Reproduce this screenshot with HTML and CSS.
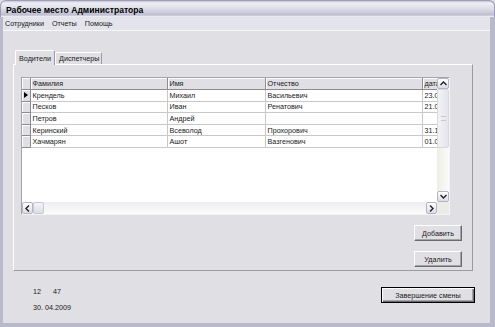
FILE: index.html
```html
<!DOCTYPE html>
<html lang="ru">
<head>
    <meta charset="UTF-8">
    <title>Рабочее место Администратора</title>
    <link rel="stylesheet" href="styles.css">
</head>
<body>
    <div class="window">
        <div class="titlebar">Рабочее место Администратора</div>
        <div class="frame">
            <div class="menubar">
                <span>Сотрудники</span>
                <span>Отчеты</span>
                <span>Помощь</span>
            </div>
            <div class="client">
                <div class="tabs">
                    <div class="tab active">Водители</div>
                    <div class="tab">Диспетчеры</div>
                </div>
                <div class="tab-panel">
                    <div class="grid">
                        <div class="grid-view">
                            <table class="data">
                                <colgroup>
                                    <col class="c-ind"><col class="c-fam"><col class="c-name"><col class="c-patr"><col class="c-date">
                                </colgroup>
                                <thead>
                                    <tr><th class="ind"></th><th>Фамилия</th><th>Имя</th><th>Отчество</th><th>дата</th></tr>
                                </thead>
                                <tbody>
                                    <tr><td class="ind"><span class="pointer"></span></td><td>Крендель</td><td>Михаил</td><td>Васильевич</td><td>23.09.1972</td></tr>
                                    <tr><td class="ind"></td><td>Песков</td><td>Иван</td><td>Ренатович</td><td>21.03.1980</td></tr>
                                    <tr><td class="ind"></td><td>Петров</td><td>Андрей</td><td></td><td></td></tr>
                                    <tr><td class="ind"></td><td>Керинский</td><td>Всеволод</td><td>Прохорович</td><td>31.12.1968</td></tr>
                                    <tr><td class="ind"></td><td>Хачмарян</td><td>Ашот</td><td>Вазгенович</td><td>01.05.1977</td></tr>
                                </tbody>
                            </table>
                        </div>
                        <div class="vscroll">
                            <div class="sbtn">
                                <svg width="7" height="5" viewBox="0 0 7 5"><path d="M0.5 4 L3.5 1 L6.5 4" fill="none" stroke="#222" stroke-width="1.4"/></svg>
                            </div>
                            <div class="vtrack"><div class="vthumb"><span class="grip"></span></div></div>
                            <div class="sbtn">
                                <svg width="7" height="5" viewBox="0 0 7 5"><path d="M0.5 1 L3.5 4 L6.5 1" fill="none" stroke="#222" stroke-width="1.4"/></svg>
                            </div>
                        </div>
                        <div class="hscroll">
                            <div class="sbtn">
                                <svg width="5" height="7" viewBox="0 0 5 7"><path d="M4 0.5 L1 3.5 L4 6.5" fill="none" stroke="#222" stroke-width="1.4"/></svg>
                            </div>
                            <div class="hthumb"></div>
                            <div class="htrack"></div>
                            <div class="sbtn">
                                <svg width="5" height="7" viewBox="0 0 5 7"><path d="M1 0.5 L4 3.5 L1 6.5" fill="none" stroke="#222" stroke-width="1.4"/></svg>
                            </div>
                        </div>
                        <div class="corner"></div>
                    </div>
                    <div class="actions">
                        <div class="button">Добавить</div>
                        <div class="button">Удалить</div>
                    </div>
                </div>
                <div class="footer">
                    <div class="clock">
                        <div><span class="hh">12</span>47</div>
                        <div>30. 04.2009</div>
                    </div>
                    <div class="button default">Завершение смены</div>
                </div>
            </div>
        </div>
    </div>
</body>
</html>
```

FILE: styles.css
```css
body {
    margin: 0;
    width: 495px;
    height: 327px;
    overflow: hidden;
    background: #e0dfe3;
    font-family: "Liberation Sans", Arial, sans-serif;
    font-size: 7.2px;
    color: #1a1a1a;
}
.window {
    height: 327px;
    display: flex;
    flex-direction: column;
}
.titlebar {
    height: 17px;
    box-sizing: border-box;
    padding: 1px 0 0 5px;
    display: flex;
    align-items: center;
    font-size: 8.6px;
    font-weight: bold;
    color: #000;
    border: 1px solid #9c9cb4;
    border-bottom: none;
    border-radius: 6px 6px 0 0;
    background: linear-gradient(#c4c4d6 0, #eeeef4 2px, #dcdce8 8px, #bdbdd0 14px, #fafafc 16px);
}
.frame {
    flex: 1;
    display: flex;
    flex-direction: column;
    border-left: 3px solid #b9b9cc;
    border-right: 5px solid #b9b9cc;
    border-bottom: 4px solid #b9b9cc;
}
.menubar {
    height: 14px;
    box-sizing: border-box;
    display: flex;
    align-items: center;
    gap: 8px;
    padding-left: 2px;
    background: #e4e4ec;
    border-bottom: 1px solid #f8f8fa;
}
.client {
    flex: 1;
    padding: 19px 15px 0 10px;
}
.tabs {
    display: flex;
    align-items: flex-end;
    height: 14px;
    padding-left: 2px;
}
.tab {
    height: 12px;
    box-sizing: border-box;
    padding: 0 2px 0 3px;
    display: flex;
    align-items: center;
    border: 1px solid #9a9aa0;
    border-top-color: #fff;
    border-left-color: #fff;
    border-bottom: none;
    border-radius: 2px 2px 0 0;
    background: #e0dfe3;
}
.tab.active {
    height: 15px;
    margin-bottom: -1px;
    padding: 0 3px 0 3px;
    position: relative;
    z-index: 1;
}
.tab-panel {
    height: 207px;
    box-sizing: border-box;
    margin-right: 2px;
    padding: 12px 10px 0 7px;
    display: flex;
    flex-direction: column;
    border: 1px solid #fff;
    border-right-color: #9a9aa0;
    border-bottom-color: #9a9aa0;
}
.grid {
    width: 429px;
    height: 138px;
    box-sizing: border-box;
    display: grid;
    grid-template-columns: 1fr 12px;
    grid-template-rows: 1fr 12px;
    border: 1px solid #a4a4a8;
    border-right-color: #f4f4f6;
    border-bottom-color: #f4f4f6;
    background: #fff;
}
.grid-view {
    overflow: hidden;
}
.data {
    table-layout: fixed;
    border-collapse: collapse;
    width: 416px;
}
.c-ind { width: 8px; }
.c-fam { width: 137px; }
.c-name { width: 98px; }
.c-patr { width: 157px; }
.c-date { width: 16px; }
.data th, .data td {
    padding: 0 0 0 2px;
    white-space: nowrap;
    overflow: hidden;
    text-align: left;
    font-weight: normal;
}
.data th {
    height: 11px;
    background: #e0dfe3;
    border-right: 1px solid #8c8c90;
    border-bottom: 1px solid #8c8c90;
    box-shadow: inset 1px 1px #fff;
}
.data td {
    height: 10.6px;
    background: #fff;
    border-right: 1px solid #c8c8cc;
    border-bottom: 1px solid #c8c8cc;
}
.data .ind {
    padding: 0;
    background: #e0dfe3;
    border-right: 1px solid #8c8c90;
    border-bottom: 1px solid #8c8c90;
    box-shadow: inset 1px 1px #fff;
}
.pointer {
    display: block;
    width: 0;
    height: 0;
    margin-left: 2px;
    border-top: 3.5px solid transparent;
    border-bottom: 3.5px solid transparent;
    border-left: 4px solid #000;
}
.vscroll {
    display: flex;
    flex-direction: column;
    background: linear-gradient(90deg, #eeeee8, #fbfbf9);
}
.hscroll {
    display: flex;
    background: linear-gradient(#eeeef2, #fbfbfd);
}
.sbtn {
    width: 12px;
    height: 11px;
    box-sizing: border-box;
    display: flex;
    align-items: center;
    justify-content: center;
    border: 1px solid #b4b4c4;
    border-radius: 2px;
    background: linear-gradient(#ffffff, #dcdce6);
}
.hscroll .sbtn {
    width: 11px;
    height: 12px;
}
.vtrack {
    flex: 1;
}
.vthumb {
    height: 59px;
    box-sizing: border-box;
    display: flex;
    align-items: center;
    justify-content: center;
    border: 1px solid #d8d8e0;
    border-radius: 2px;
    background: linear-gradient(90deg, #f2f2f6, #e4e4ec);
}
.grip {
    width: 5px;
    height: 5px;
    border-top: 1px solid #c8c8d0;
    border-bottom: 1px solid #c8c8d0;
    box-sizing: border-box;
}
.hthumb {
    width: 11px;
    box-sizing: border-box;
    border: 1px solid #c8c8d4;
    border-radius: 2px;
    background: linear-gradient(#f4f4f8, #dcdce4);
}
.htrack {
    flex: 1;
}
.corner {
    background: #ecebe8;
}
.actions {
    align-self: flex-end;
    display: flex;
    flex-direction: column;
    gap: 10px;
    margin-top: 10px;
}
.button {
    width: 48px;
    height: 16px;
    box-sizing: border-box;
    display: flex;
    align-items: center;
    justify-content: center;
    background: #e0dfe3;
    border: 1px solid #fff;
    border-right-color: #6c6c70;
    border-bottom-color: #6c6c70;
    box-shadow: inset -1px -1px #a4a4a8;
}
.footer {
    display: flex;
    justify-content: space-between;
    align-items: flex-start;
    padding: 16px 0 0 20px;
}
.clock {
    display: flex;
    flex-direction: column;
    gap: 6px;
    line-height: 10px;
}
.hh {
    display: inline-block;
    width: 20px;
}
.button.default {
    width: 94px;
    height: 16px;
    border: 1px solid #000;
    box-shadow: inset 1px 1px #fff, inset -1px -1px #6c6c70, inset -2px -2px #a4a4a8;
}
```
